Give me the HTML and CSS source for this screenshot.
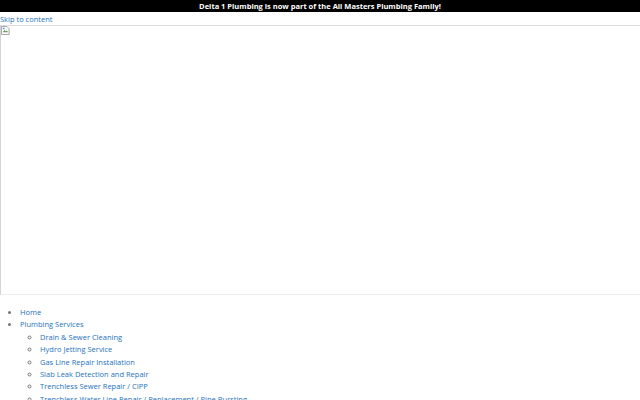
FILE: index.html
```html
<!DOCTYPE html>
<html>
<head>
<meta charset="utf-8">
<link rel="stylesheet" href="styles.css">
</head>
<body>
<div class="topbar">Delta 1 Plumbing is now part of the All Masters Plumbing Family!</div>
<a class="skip" href="#content">Skip to content</a>
<div class="hero">
  <svg class="broken" width="9" height="9" viewBox="0 0 10 10">
    <path d="M0.5 0.5h6l2.5 2.5v6.5h-8.5z" fill="#fff" stroke="#9a9a9a"/>
    <path d="M2 7l2-2.5 1.5 1.5 1-1 1.5 2z" fill="#5a9a4a"/>
    <rect x="2" y="2" width="2" height="1.5" fill="#4a8ad0"/>
  </svg>
</div>
<ul class="menu">
  <li><a href="#">Home</a></li>
  <li><a href="#">Plumbing Services</a>
    <ul class="sub">
      <li><a href="#">Drain &amp; Sewer Cleaning</a></li>
      <li><a href="#">Hydro Jetting Service</a></li>
      <li><a href="#">Gas Line Repair Installation</a></li>
      <li><a href="#">Slab Leak Detection and Repair</a></li>
      <li><a href="#">Trenchless Sewer Repair / CIPP</a></li>
      <li><a href="#">Trenchless Water Line Repair / Replacement / Pipe Bursting</a></li>
    </ul>
  </li>
</ul>
</body>
</html>
```
FILE: styles.css
```css
html, body {
  margin: 0;
  padding: 0;
  background: #fff;
  font-family: "Open Sans", "Noto Sans", sans-serif;
  font-size: 7.5px;
  overflow: hidden;
}
.topbar {
  background: #000;
  color: #fff;
  font-weight: 700;
  text-align: center;
  height: 12px;
  line-height: 12px;
}
.skip {
  display: block;
  color: #1e73be;
  text-decoration: none;
  padding-top: 1px;
  line-height: 12px;
  height: 12px;
}
.hero {
  height: 268px;
  border-top: 1px solid #dcdcdc;
  border-left: 1px solid #d4d4d4;
  border-bottom: 1px solid #ececec;
}
.broken {
  display: block;
}
.menu {
  margin: 11px 0 0;
  padding: 0 0 0 20px;
  line-height: 12.4px;
  list-style: disc;
  color: #777;
}
.menu .sub {
  margin: 0;
  padding: 0 0 0 20px;
  list-style: circle;
}
.menu a {
  color: #1e73be;
  text-decoration: none;
}
```
